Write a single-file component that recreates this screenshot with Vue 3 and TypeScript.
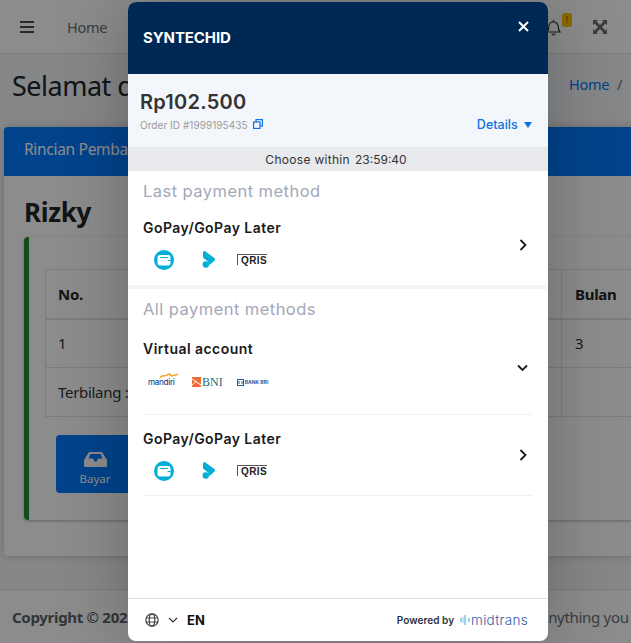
<script setup lang="ts">
interface Method {
  name: string
  kind: 'gopay' | 'va'
  chevron: 'right' | 'down'
}
const lastMethods: Method[] = [{ name: 'GoPay/GoPay Later', kind: 'gopay', chevron: 'right' }]
const allMethods: Method[] = [
  { name: 'Virtual account', kind: 'va', chevron: 'down' },
  { name: 'GoPay/GoPay Later', kind: 'gopay', chevron: 'right' },
]
</script>

<template>
  <div class="page">
    <nav class="navbar">
      <svg class="burger" width="14" height="12" viewBox="0 0 14 12"><path d="M0 1h14M0 6h14M0 11h14" stroke="#4a4a4a" stroke-width="2" /></svg>
      <span class="nav-link">Home</span>
      <span class="nav-spacer"></span>
      <svg class="bell" width="15" height="17" viewBox="0 0 15 17" fill="none" stroke="#333" stroke-width="1.2"><path d="M1 13c1.3-1.3 1.8-2.6 1.8-5.500C2.800 4.800 5 3 7.500 3s4.700 1.800 4.700 4.500c0 2.900.5 4.200 1.800 5.500z" /><path d="M6 14.500a1.500 1.500 0 0 0 3 0" /><path d="M7.500 1v2" /></svg>
      <span class="badge">!</span>
      <svg class="expand" width="14" height="14" viewBox="0 0 14 14"><path d="M0 0h5L3.500 1.500 7 5l3.500-3.500L9 0h5v5l-1.500-1.500L9 7l3.500 3.500L14 9v5H9l1.500-1.500L7 9l-3.500 3.500L5 14H0V9l1.500 1.500L5 7 1.500 3.500 0 5z" fill="#6a6f75" /></svg>
    </nav>

    <header class="content-header">
      <h1>Selamat datang</h1>
      <div class="crumbs"><a>Home</a><span>/</span></div>
    </header>

    <section class="card">
      <div class="card-head">Rincian Pembayaran</div>
      <div class="card-body">
        <h3>Rizky</h3>
        <div class="callout">
          <table>
            <thead>
              <tr><th class="c-no">No.</th><th class="c-mid">Keterangan</th><th>Bulan</th></tr>
            </thead>
            <tbody>
              <tr><td class="c-no">1</td><td></td><td>3</td></tr>
              <tr><td class="c-no" colspan="2">Terbilang :</td><td></td></tr>
            </tbody>
          </table>
          <button class="pay" type="button">
            <svg width="23" height="15" viewBox="0 0 23 15"><path d="M5 0h13l5 8v5.500a1.500 1.500 0 0 1-1.500 1.500h-20A1.500 1.500 0 0 1 0 13.500V8z" fill="#fff" /><path d="M4.500 6.500h4.500l1.500 3h2l1.500-3h4.500L16.500 2h-10z" fill="#007bff" /></svg>
            <span>Bayar</span>
          </button>
        </div>
      </div>
    </section>

    <footer class="page-foot">
      <b>Copyright © 2023</b>
      <span class="foot-right">Anything you want</span>
    </footer>

    <div class="overlay">
      <aside class="modal">
        <div class="m-head">
          <span class="brand">SYNTECHID</span>
          <svg class="close" width="11" height="11" viewBox="0 0 11 11"><path d="M1 1l9 9M10 1l-9 9" stroke="#fff" stroke-width="2" /></svg>
        </div>
        <div class="m-amount">
          <div class="amount-left">
            <div class="amount">Rp102.500</div>
            <div class="order">
              <span>Order ID #1999195435</span>
              <svg width="10" height="10" viewBox="0 0 10 10" fill="none" stroke="#0a74e0" stroke-width="1.200"><rect x="3" y=".6" width="6.400" height="6.400" /><rect x=".6" y="3" width="6.400" height="6.400" fill="#f3f6fa" /></svg>
            </div>
          </div>
          <div class="details">Details <i class="caret"></i></div>
        </div>
        <div class="timer"><span class="timer-label">Choose within</span><span>23:59:40</span></div>

        <div class="m-body">
          <div class="group-title">Last payment method</div>
          <div v-for="m in lastMethods" :key="m.name" class="method solo">
            <div class="method-main">
              <div class="method-name">{{ m.name }}</div>
              <div class="logos">
                <svg width="20" height="20" viewBox="0 0 20 20"><circle cx="10" cy="10" r="10" fill="#00aed6" /><path d="M3.500 7.500A2.500 2.500 0 0 1 6 5h8.500A2 2 0 0 1 16.500 7v6.500a2 2 0 0 1-2 2H6a2.500 2.500 0 0 1-2.500-2.500z" fill="#fff" /><path d="M6 7.500h8M13.500 10.500h3" stroke="#00aed6" stroke-width="1" /></svg>
                <svg width="13" height="17" viewBox="0 0 13 17"><path d="M1 1.500A1.500 1.500 0 0 1 3.500 0.500L12.300 7a1.800 1.800 0 0 1 0 2.700L7.500 14 6 10.500 1.500 7A1.500 1.500 0 0 1 1 5.500z" fill="#00aed6" /><circle cx="3.800" cy="13.500" r="3.200" fill="#00aed6" /></svg>
                <span class="qris">QRIS</span>
              </div>
            </div>
            <svg class="chev" width="8" height="12" viewBox="0 0 8 12"><path d="M1.500 1l5 5-5 5" fill="none" stroke="#1a1a1a" stroke-width="1.800" /></svg>
          </div>
          <div class="thick"></div>
          <div class="group-title">All payment methods</div>
          <div v-for="m in allMethods" :key="m.name" class="method" :class="m.kind">
            <div class="method-main">
              <div class="method-name">{{ m.name }}</div>
              <div v-if="m.kind === 'gopay'" class="logos">
                <svg width="20" height="20" viewBox="0 0 20 20"><circle cx="10" cy="10" r="10" fill="#00aed6" /><path d="M3.500 7.500A2.500 2.500 0 0 1 6 5h8.500A2 2 0 0 1 16.500 7v6.500a2 2 0 0 1-2 2H6a2.500 2.500 0 0 1-2.500-2.500z" fill="#fff" /><path d="M6 7.500h8M13.500 10.500h3" stroke="#00aed6" stroke-width="1" /></svg>
                <svg width="13" height="17" viewBox="0 0 13 17"><path d="M1 1.500A1.500 1.500 0 0 1 3.500 0.500L12.300 7a1.800 1.800 0 0 1 0 2.700L7.500 14 6 10.500 1.500 7A1.500 1.500 0 0 1 1 5.500z" fill="#00aed6" /><circle cx="3.800" cy="13.500" r="3.200" fill="#00aed6" /></svg>
                <span class="qris">QRIS</span>
              </div>
              <div v-else class="logos banks">
                <span class="mandiri">mandiri<svg width="18" height="5" viewBox="0 0 18 5"><path d="M0 4.500C3 1 5 4 7 2s3-1 4 .5 3-1 7-1" fill="none" stroke="#f5a623" stroke-width="1.500" /></svg></span>
                <span class="bni"><svg width="9" height="10" viewBox="0 0 9 10"><rect width="9" height="10" fill="#ef6c35" /><path d="M0 2l9 6M0 8l4.500-4" stroke="#fff" stroke-width="1" /></svg>BNI</span>
                <span class="bri"><svg width="7" height="7" viewBox="0 0 7 7"><rect x=".5" y=".5" width="6" height="6" fill="none" stroke="#1f5c9e" /><path d="M2 2v3M5 2v3" stroke="#1f5c9e" /></svg>BANK BRI</span>
              </div>
            </div>
            <svg v-if="m.chevron === 'right'" class="chev" width="8" height="12" viewBox="0 0 8 12"><path d="M1.500 1l5 5-5 5" fill="none" stroke="#1a1a1a" stroke-width="1.800" /></svg>
            <svg v-else class="chev" width="11" height="8" viewBox="0 0 11 8"><path d="M1 1.500l4.500 4.500 4.500-4.500" fill="none" stroke="#1a1a1a" stroke-width="1.800" /></svg>
          </div>
        </div>

        <div class="m-foot">
          <svg width="14" height="14" viewBox="0 0 14 14" fill="none" stroke="#444" stroke-width="1.200"><circle cx="7" cy="7" r="6.200" /><ellipse cx="7" cy="7" rx="2.800" ry="6.200" /><path d="M1 5h12M1 9h12" /></svg>
          <svg class="lang-chev" width="10" height="6" viewBox="0 0 10 6"><path d="M1 1l4 4 4-4" fill="none" stroke="#333" stroke-width="1.200" /></svg>
          <b class="lang">EN</b>
          <span class="nav-spacer"></span>
          <span class="powered">Powered by</span>
          <svg width="10" height="10" viewBox="0 0 10 10"><path d="M1 3v4M5 0v10M9 3v4" stroke="#2eaacb" stroke-width="1" /><path d="M3 2v6" stroke="#8cc8dc" stroke-width="1" /></svg>
          <span class="midtrans">midtrans</span>
        </div>
      </aside>
    </div>
  </div>
</template>

<style scoped>
.page {
  position: relative;
  width: 631px;
  height: 643px;
  overflow: hidden;
  display: flex;
  flex-direction: column;
  background: #f4f6f9;
  font-family: "Noto Sans", sans-serif;
  color: #212529;
}
.navbar {
  flex: none;
  height: 53px;
  box-sizing: content-box;
  display: flex;
  align-items: center;
  padding-left: 20px;
  padding-right: 24px;
  background: #fff;
  border-bottom: 1px solid #dee2e6;
}
.burger { margin-right: 33px; }
.nav-link { font-size: 14.500px; letter-spacing: -.3px; color: #6b7178; }
.nav-spacer { flex: 1; }
.bell { margin-top: 1px; }
.badge {
  width: 10px;
  height: 14px;
  margin: -14px 21px 0 1px;
  border-radius: 3px;
  background: #ffc107;
  color: #7a5c00;
  font-size: 9px;
  line-height: 14px;
  text-align: center;
}
.content-header {
  flex: none;
  height: 73px;
  display: flex;
  align-items: center;
  justify-content: space-between;
  padding: 0 0 8px 12px;
  box-sizing: border-box;
}
.content-header h1 { margin: 0; font-size: 27px; font-weight: 400; letter-spacing: -.5px; line-height: 1.2; }
.crumbs { display: flex; gap: 8px; width: 62px; font-size: 14.500px; letter-spacing: -.3px; color: #6c757d; margin-top: -6px; }
.crumbs a { color: #007bff; }
.card {
  flex: none;
  height: 429px;
  margin-left: 4px;
  width: 640px;
  background: #fff;
  border-radius: 4px;
  box-shadow: 0 0 10px rgba(0,0,0,.2);
}
.card-head {
  height: 49px;
  padding-left: 20px;
  box-sizing: border-box;
  background: #007bff;
  color: #fff;
  font-size: 15.500px;
  letter-spacing: -.3px;
  line-height: 45px;
  border-radius: 4px 4px 0 0;
}
.card-body { padding: 19px 0 0 20px; }
.card-body h3 { margin: 0 0 7px; height: 35px; font-size: 26px; line-height: 35px; font-weight: 700; letter-spacing: -.3px; }
.callout {
  box-sizing: border-box;
  height: 283px;
  padding: 32px 0 0 16px;
  border-left: 5px solid #1f8a38;
  border-top-left-radius: 4px;
  border-bottom-left-radius: 4px;
  box-shadow: 0 1px 3px rgba(0,0,0,.3);
}
table { width: 600px; border-collapse: collapse; table-layout: fixed; font-size: 15px; letter-spacing: -.3px; color: #333; }
th, td { box-sizing: border-box; border: 1px solid #dee2e6; height: 49px; padding: 0 13px; text-align: left; }
thead th { border-bottom-width: 2px; font-weight: 700; color: #212529; }
th.c-no, td.c-no { padding-left: 12px; }
.c-no { width: 100px; }
.c-mid { width: 416px; }
.pay {
  display: flex;
  flex-direction: column;
  align-items: center;
  gap: 4px;
  width: 78px;
  height: 58px;
  margin: 18px 0 0 11px;
  padding: 17px 0 0;
  box-sizing: border-box;
  border: none;
  border-radius: 4px;
  background: #007bff;
  color: #fff;
  font-family: inherit;
  font-size: 11.500px;
}
.page-foot {
  flex: none;
  margin-top: 33px;
  flex-grow: 1;
  display: flex;
  align-items: center;
  justify-content: space-between;
  white-space: nowrap;
  padding: 0 0 0 12px;
  background: #fff;
  border-top: 1px solid #dee2e6;
  font-size: 15px;
  letter-spacing: -.3px;
  color: #6b7178;
}
.page-foot b { color: #5b6269; }
.foot-right { margin-right: -35px; }
.overlay {
  position: absolute;
  inset: 0;
  background: rgba(0,0,0,.45);
}
.modal {
  position: absolute;
  left: 128px;
  top: 2px;
  bottom: 2px;
  width: 420px;
  display: flex;
  flex-direction: column;
  overflow: hidden;
  border-radius: 8px;
  background: #fff;
  box-shadow: 0 0 70px rgba(0,0,0,.25);
  font-family: Inter, sans-serif;
  color: #1a1a1a;
}
.m-head {
  flex: none;
  height: 72px;
  position: relative;
  display: flex;
  align-items: center;
  padding: 0 0 2px 15px;
  box-sizing: border-box;
  background: #002855;
}
.brand { color: #fff; font-size: 15px; font-weight: 700; letter-spacing: -.1px; }
.close { position: absolute; top: 19px; right: 19px; }
.m-amount {
  flex: none;
  height: 73px;
  display: flex;
  justify-content: space-between;
  align-items: flex-end;
  padding: 0 16px 16px 12px;
  box-sizing: border-box;
  background: #f3f6fa;
}
.amount { font-size: 20px; font-weight: 600; line-height: 26px; color: #333; letter-spacing: .25px; }
.order { display: flex; align-items: center; gap: 5px; margin-top: 4px; height: 12px; font-size: 10px; letter-spacing: .05px; color: #9a9a9a; }
.order svg { margin-top: -3px; }
.details { font-size: 12.500px; font-weight: 500; color: #0a74e0; line-height: 12px; white-space: nowrap; }
.caret {
  display: inline-block;
  width: 0;
  height: 0;
  margin-left: 3px;
  border-left: 4.500px solid transparent;
  border-right: 4.500px solid transparent;
  border-top: 6px solid #0a74e0;
  vertical-align: 1px;
}
.timer {
  flex: none;
  height: 24px;
  display: flex;
  justify-content: center;
  align-items: center;
  gap: 5px;
  padding-right: 4px;
  background: #e8eaed;
  font-size: 12px;
  color: #333;
}
.timer-label { letter-spacing: .3px; }
.m-body { flex: 1; padding: 0 16px 0 15px; }
.group-title { font-size: 16.500px; letter-spacing: .45px; color: #a4a7b7; line-height: 24px; padding-top: 8px; white-space: nowrap; }
.method { display: flex; align-items: center; justify-content: space-between; border-bottom: 1px solid #f0f1f3; }
.method-name { font-size: 14px; font-weight: 600; line-height: 20px; letter-spacing: .45px; color: #1a1a1a; }
.method.solo { height: 82px; border-bottom: none; padding: 2px 0; box-sizing: border-box; }
.method.va { margin-top: 13px; padding-bottom: 16px; height: 64px; }
.method.gopay { height: 80px; }
.logos { display: flex; align-items: center; height: 22px; margin-top: 11px; padding-left: 11px; }
.logos > svg:nth-child(2) { margin-left: 28px; }
.qris {
  position: relative;
  margin-left: 22px;
  padding: 1px 0 0 3px;
  font-family: "Liberation Sans", sans-serif;
  font-size: 10px;
  font-weight: 700;
  color: #222;
  letter-spacing: .4px;
  line-height: 9px;
  border-left: 1px solid #555;
  border-top: 1px solid #555;
}
.banks { padding-left: 5px; margin-top: 12px; }
.mandiri { position: relative; width: 28px; font-size: 8px; font-weight: 500; color: #1c4a8e; letter-spacing: -.3px; }
.mandiri svg { position: absolute; left: 12px; top: -4px; }
.bni { margin-left: 16px; display: flex; align-items: center; gap: 1px; font-family: "Liberation Serif", serif; font-size: 12px; color: #1f6a72; line-height: 12px; }
.bri { margin-left: 14px; display: flex; align-items: center; gap: 1px; font-size: 5px; font-weight: 700; color: #1f5c9e; white-space: nowrap; }
.chev { margin-right: 5px; }
.method.va .chev { margin-top: 4px; margin-right: 4px; }
.method.solo .chev { margin-top: 2px; }
.method.gopay .chev { margin-top: -1px; }
.thick { height: 4px; margin: 0 -16px 0 -15px; background: #f3f5f7; }
.m-foot {
  flex: none;
  height: 43px;
  display: flex;
  align-items: center;
  padding: 0 20px 0 17px;
  border-top: 1px solid #dfe2e8;
  box-sizing: border-box;
}
.lang-chev { margin-left: 9px; }
.lang { margin-left: 9px; font-size: 13px; font-weight: 700; color: #111; }
.powered { margin-right: 6px; font-size: 10px; font-weight: 600; color: #2b3040; letter-spacing: .05px; }
.midtrans { margin-left: 1px; font-size: 13.500px; font-weight: 300; letter-spacing: .3px; color: #2f5da5; }
</style>
